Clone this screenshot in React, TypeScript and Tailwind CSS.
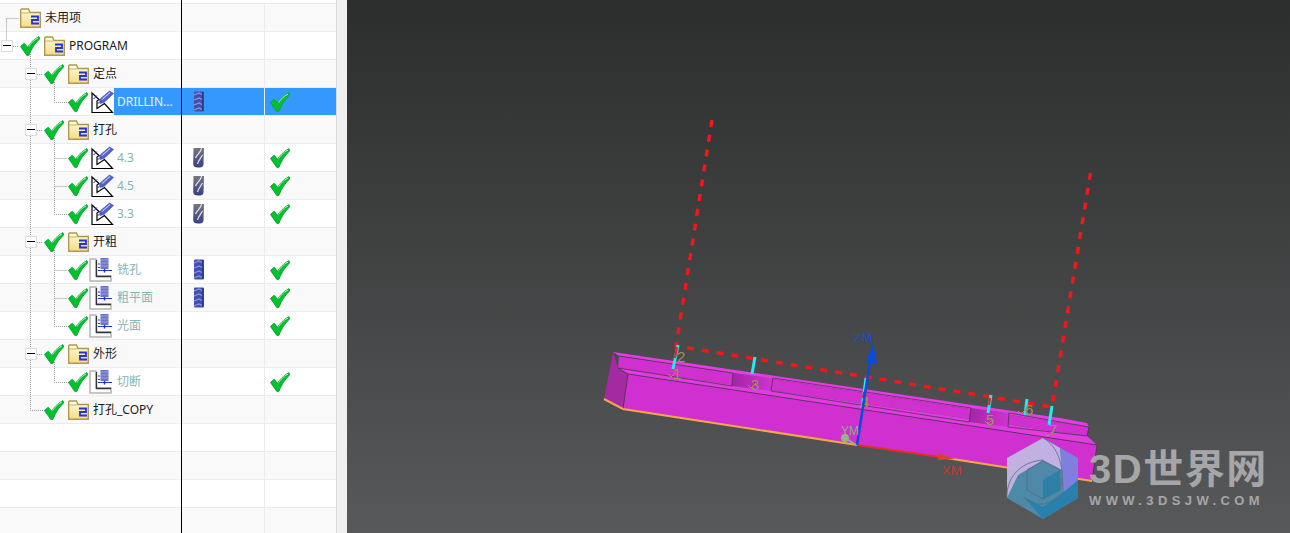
const sans = "font-['Noto_Sans','Noto_Sans_CJK_SC',sans-serif]"

type Row = {
  label?: string
  indent?: string
  expander?: boolean
  check?: boolean
  icon?: "folder" | "drill" | "mill"
  tool?: "barrel" | "twist"
  done?: boolean
  selected?: boolean
}

const rows: Row[] = [
  { label: "未用项", indent: "pl-[20px]", icon: "folder" },
  { label: "PROGRAM", indent: "pl-[1px]", expander: true, check: true, icon: "folder" },
  { label: "定点", indent: "pl-[25px]", expander: true, check: true, icon: "folder" },
  { label: "DRILLIN...", indent: "pl-[68px]", check: true, icon: "drill", tool: "barrel", done: true, selected: true },
  { label: "打孔", indent: "pl-[25px]", expander: true, check: true, icon: "folder" },
  { label: "4.3", indent: "pl-[68px]", check: true, icon: "drill", tool: "twist", done: true },
  { label: "4.5", indent: "pl-[68px]", check: true, icon: "drill", tool: "twist", done: true },
  { label: "3.3", indent: "pl-[68px]", check: true, icon: "drill", tool: "twist", done: true },
  { label: "开粗", indent: "pl-[25px]", expander: true, check: true, icon: "folder" },
  { label: "铣孔", indent: "pl-[68px]", check: true, icon: "mill", tool: "barrel", done: true },
  { label: "粗平面", indent: "pl-[68px]", check: true, icon: "mill", tool: "barrel", done: true },
  { label: "光面", indent: "pl-[68px]", check: true, icon: "mill", done: true },
  { label: "外形", indent: "pl-[25px]", expander: true, check: true, icon: "folder" },
  { label: "切断", indent: "pl-[68px]", check: true, icon: "mill", done: true },
  { label: "打孔_COPY", indent: "pl-[44px]", check: true, icon: "folder" },
  {},
  {},
  {},
  {},
]

function Check() {
  return (
    <svg width="20" height="20" viewBox="0 0 20 20" className="shrink-0">
      <path d="M0.5 10.5 L4.2 7.3 L7.6 11.3 C10 7.4 13.6 3.4 19 0.7 L19.7 3 C15 7 11.6 12.5 8.8 19.4 L6.8 19.4 Z" fill="#00c32b" stroke="#12a23c" strokeWidth="1" strokeLinejoin="round" />
      <path d="M8.6 10.6 C11 7 14 4 18 2" fill="none" stroke="#b4f0be" strokeWidth="1" />
    </svg>
  )
}

function Folder() {
  return (
    <svg width="21" height="20" viewBox="0 0 21 20" className="shrink-0">
      <defs>
        <linearGradient id="folderFill" x1="0" y1="0" x2="0" y2="1">
          <stop offset="0" stopColor="#fffde0" />
          <stop offset="1" stopColor="#f4dc84" />
        </linearGradient>
      </defs>
      <path d="M0.7 2 L0.7 19.2 L20.3 19.2 L20.3 4.5 L10 4.5 L8.5 1 L1.5 1 Z" fill="url(#folderFill)" stroke="#ae9a54" strokeWidth="1.4" />
      <path d="M1 5 L9.5 5" stroke="#c8b468" strokeWidth="1" />
      <path d="M11 8.5 H18 V12 H12 V15.5 H19" fill="none" stroke="#2230e0" strokeWidth="1.8" />
    </svg>
  )
}

function DrillOp() {
  return (
    <svg width="23" height="24" viewBox="0 -2 23 24" className="ml-[3px] shrink-0">
      <path d="M1 1 L8 7.5 L6 9 V16.5 L13.5 11.5 L21.5 20.5 H1 Z" fill="#fff" stroke="#000" strokeWidth="1.2" />
      <path d="M2.5 7 L6 3.5 M6.5 12 L8.5 10" stroke="#2030d0" strokeWidth="1" />
      <path d="M8.5 7.5 L18.5 -1 L22.5 1.5 L13 10.5 L9 11.5 Z" fill="#5262c8" stroke="#3a48a8" strokeWidth="0.6" />
      <path d="M11 7.5 L19 0.5" stroke="#b0baf0" strokeWidth="1.1" />
    </svg>
  )
}

function MillOp() {
  return (
    <svg width="24" height="24" viewBox="0 0 24 24" className="ml-[1px] mr-px shrink-0">
      <path d="M1 1 H7 V18 H22 V23 H1 Z" fill="#fff" stroke="#b4b4b4" strokeWidth="1.5" />
      <path d="M7.5 2 V18.5 H22" fill="none" stroke="#333" strokeWidth="1.3" />
      <rect x="11.5" y="0" width="8" height="11" fill="#6a75c6" />
      <path d="M12 2 H19 M12 5 H19 M12 8 H19" stroke="#98a2de" strokeWidth="1" />
      <path d="M9 12.5 H23 M9 9.5 H11 M9 6 H11" stroke="#2230e0" strokeWidth="1.2" />
      <path d="M15.5 11 V14.5" stroke="#2230e0" strokeWidth="1.5" />
    </svg>
  )
}

function BarrelTool() {
  return (
    <svg width="12" height="21" viewBox="0 0 12 21" className="ml-[11px] shrink-0">
      <rect x="1" y="0.5" width="10" height="20" rx="1" fill="#434fb0" />
      <path d="M1 4 L6 2 L9 3.5 M1 9 L6 7 L9 8.5 M1 14 L6 12 L9 13.5 M1 19 L6 17 L9 18.5" fill="none" stroke="#8c98dc" strokeWidth="1.2" />
      <path d="M9.8 1 V20" stroke="#2a3280" strokeWidth="1.2" />
    </svg>
  )
}

function TwistTool() {
  return (
    <svg width="13" height="21" viewBox="0 0 13 21" className="ml-[10px] shrink-0">
      <defs>
        <linearGradient id="twistFill" x1="0" y1="0" x2="0" y2="1">
          <stop offset="0" stopColor="#77777e" />
          <stop offset="1" stopColor="#363e84" />
        </linearGradient>
      </defs>
      <path d="M1.5 1 H12 L11.5 17 C11.5 20 9 20.5 6 20.5 C3 20.5 1.2 19.5 1.2 17 Z" fill="url(#twistFill)" />
      <path d="M9.5 1 C9.5 5 5 7 3.5 11 M10.5 8 C9 11 6.5 13 5.5 17" fill="none" stroke="#e8e8f0" strokeWidth="1.1" />
    </svg>
  )
}

function TreeLines() {
  return (
    <svg className="absolute left-0 top-0 pointer-events-none" width="70" height="420" viewBox="0 0 70 420">
      <path
        d="M6.5 18.5 V40 M6.5 18.5 H19 M13 46.5 H19 M30.5 52 V410.5 H43 M37 74.5 H43 M37 130.5 H43 M37 242.5 H43 M37 354.5 H43 M54.5 80 V102.5 H67 M54.5 136 V214.5 H67 M54.5 158.5 H67 M54.5 186.5 H67 M54.5 248 V326.5 H67 M54.5 270.5 H67 M54.5 298.5 H67 M54.5 360 V382.5 H67"
        fill="none"
        stroke="#999"
        strokeWidth="1"
        strokeDasharray="1 1"
      />
    </svg>
  )
}

function TreeRow({ row, index }: { row: Row; index: number }) {
  const striped = index % 2 === 0
  return (
    <div className={`flex h-[28px] border-b border-[#ececec] ${row.selected ? "bg-[#3399ff]" : striped ? "bg-[#f9f9f9]" : "bg-white"}`}>
      <div className={`flex w-[182px] shrink-0 items-center pr-px ${row.selected ? "bg-white" : ""} ${row.indent ?? ""}`}>
        {row.expander && (
          <span className="relative z-10 mr-[7px] flex h-[12px] w-[12px] items-center justify-center border border-[#dcdcdc] bg-white">
            <span className="h-px w-[8px] bg-black" />
          </span>
        )}
        {row.check && <Check />}
        {row.icon === "folder" && <span className={row.check ? "ml-[4px] flex" : "flex"}><Folder /></span>}
        {row.icon === "drill" && <DrillOp />}
        {row.icon === "mill" && <MillOp />}
        {row.label && (
          <span
            className={`flex h-full min-w-0 flex-1 items-center text-[12px] whitespace-nowrap ${row.selected ? "bg-[#3399ff] pl-[3px] text-[#e8f3ff]" : row.icon === "folder" ? "pl-[4px] text-[#1a1a1a]" : "pl-[3px] text-[#86b4b4]"}`}
          >
            {row.label}
          </span>
        )}
      </div>
      <div className="flex w-[83px] shrink-0 items-center border-r border-[#ececec]">
        {row.tool === "barrel" && <BarrelTool />}
        {row.tool === "twist" && <TwistTool />}
      </div>
      <div className="flex flex-1 items-center pl-[5px]">{row.done && <Check />}</div>
    </div>
  )
}

function Scene() {
  const labels: [string, number, number][] = [
    ["1", 673, 379], ["2", 677, 362], ["3", 751, 390], ["4", 861, 407],
    ["5", 986, 425], ["6", 1025, 415], ["7", 1049, 435],
  ]
  const ticks: [number, number][] = [
    [668, 377], [748, 388], [858, 408], [985, 424], [1018, 414], [1045, 436],
  ]
  return (
    <svg className="absolute inset-0 h-full w-full" viewBox="347 0 943 533">
      <defs>
        <linearGradient id="pocket" x1="0" y1="0" x2="1" y2="0">
          <stop offset="0" stopColor="#a026a4" />
          <stop offset="1" stopColor="#d034d0" />
        </linearGradient>
      </defs>
      {/* part body */}
      <polygon points="613,352 604,399 623,409 628,374 618,368" fill="#a32aa0" />
      <polygon points="613,352 1060,418 1087,423 1089,427 619,356" fill="#e23ee2" />
      <polygon points="619,356 1089,427 1087,436 618,368" fill="#cf30cf" />
      <polygon points="618,368 1087,436 1097,445 628,374" fill="#e03ce0" />
      <polygon points="628,374 1097,445 1092,481 623,409" fill="#cf30cf" />
      <polygon points="733,373 773,378 771,391 732,386" fill="url(#pocket)" />
      <polygon points="971,408 1009,413 1008,427 969,422" fill="url(#pocket)" />
      <path d="M619 356 L733 373 M773 378 L971 408 M1009 413 L1089 427 M618 368 L732 386 M771 391 L969 422 M1008 427 L1087 436 M628 374 L1097 445 M733 373 L732 386 M773 378 L771 391 M971 408 L969 422 M1009 413 L1008 427 M1089 427 L1087 436 M1097 445 L1092 481 M628 374 L623 409 M618 368 L628 374" fill="none" stroke="#3c3040" strokeWidth="0.9" strokeOpacity="0.75" />
      {/* bottom edge */}
      <path d="M604 399 L623 409 L857 445" fill="none" stroke="#f5a64a" strokeWidth="2" />
      <path d="M940 457 L1092 481" fill="none" stroke="#f5a64a" strokeWidth="2" />
      <path d="M857 445 L940 457" fill="none" stroke="#e03020" strokeWidth="2" />
      <polygon points="938,453 955,459 938,460" fill="#d84030" />
      {/* tool path */}
      <path d="M712 120 L676 346 L1052 407 L1091 170" fill="none" stroke="#f01818" strokeWidth="3.5" strokeDasharray="7 8" />
      <path d="M673 369 L678 345 M752 374 L755 357 M862 408 L866 378 M988 413 L991 395 M1025 415 L1027 399 M1049 425 L1052 406" fill="none" stroke="#22eaf0" strokeWidth="3" />
      <path d="M677 347 L675 358 M863 398 L864 392 M989 405 L990 398" fill="none" stroke="#f01818" strokeWidth="2" />
      {labels.map(([t, x, y]) => (
        <text key={t} x={x} y={y} fontSize="15" fill="#a0925c" fontFamily="'Liberation Sans', sans-serif">{t}</text>
      ))}
      {ticks.map(([x, y]) => (
        <path key={x} d={`M${x} ${y - 3} L${x + 3} ${y} L${x + 8} ${y - 5}`} fill="none" stroke="#a0925c" strokeWidth="1" />
      ))}
      {/* axes */}
      <path d="M857 445 L871 355" stroke="#0a4adc" strokeWidth="2.5" />
      <polygon points="873,343 877,364 866,362" fill="#0a4adc" />
      <text x="854" y="342" fontSize="13" fill="#1848e0" fontFamily="'Liberation Sans', sans-serif">ZM</text>
      <text x="841" y="435" fontSize="12" fill="#86b080" fontFamily="'Liberation Sans', sans-serif">YM</text>
      <circle cx="845" cy="438" r="4" fill="#96b48c" />
      <path d="M845 438 L856 445" stroke="#96b48c" strokeWidth="1.5" />
      <text x="942" y="475" fontSize="13" fill="#c03a34" fontFamily="'Liberation Sans', sans-serif">XM</text>
      {/* watermark logo */}
      <polygon points="1043,438 1078,458 1078,498 1043,519 1007,498 1007,458" fill="#4c90b0" fillOpacity="0.9" />
      <polygon points="1043,438 1060,448 1062,470 1043,460 1018,475 1007,498 1007,458" fill="#e4bdf0" fillOpacity="0.75" />
      <polygon points="1060,448 1078,458 1078,498 1064,490 1062,470" fill="#7f7fe0" />
      <polygon points="1027,470 1043,461 1060,470 1060,490 1043,499 1027,490" fill="#4f88a8" stroke="#5a6a80" strokeWidth="0.8" />
      <polygon points="1043,480 1060,470 1060,490 1043,499" fill="#2d80a8" />
      <polygon points="1024,497 1043,507 1064,492 1078,480 1078,498 1043,519" fill="#2a80ad" />
      <path d="M1007 498 C1006 480 1018 462 1043 460 M1043 438 C1058 446 1064 466 1062 486 M1024 497 C1030 505 1045 510 1064 492" fill="none" stroke="#5a6a80" strokeWidth="0.8" />
    </svg>
  )
}

export default function App() {
  return (
    <div className={`flex h-[533px] w-[1290px] overflow-hidden bg-white ${sans}`}>
      <div className="relative h-full w-[337px] shrink-0 overflow-hidden border-r border-[#dcdcdc]">
        <div className="h-[4px] border-b border-[#ececec]" />
        {rows.map((row, i) => (
          <TreeRow key={i} row={row} index={i} />
        ))}
        <TreeLines />
        <div className="absolute left-[181px] top-0 h-full w-px bg-black" />
      </div>
      <div className="w-[10px] shrink-0 bg-[#f0f0f0]" />
      <div className="relative flex-1 bg-gradient-to-b from-[#2c2e2e] to-[#58595a]">
        <Scene />
        <div className="absolute left-[742px] top-[447px] flex flex-col font-['Liberation_Sans','Noto_Sans_CJK_SC',sans-serif] text-[#a6a6a8]">
          <span className="text-[40px] font-bold leading-[45px] tracking-[1.5px]">3D世界网</span>
          <span className="mt-[1px] text-[13px] font-bold leading-[15px] tracking-[4.4px]">WWW.3DSJW.COM</span>
        </div>
      </div>
    </div>
  )
}
